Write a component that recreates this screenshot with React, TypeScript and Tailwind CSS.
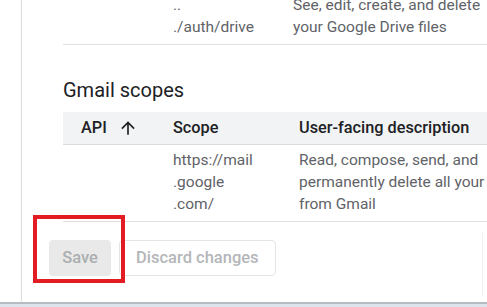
import React from 'react';

function ArrowUp() {
  return (
    <svg width="20" height="20" viewBox="0 0 24 24" className="fill-[#202124]">
      <path d="M4 12l1.41 1.41L11 7.83V20h2V7.83l5.58 5.59L20 12l-8-8-8 8z" />
    </svg>
  );
}

export default function App() {
  return (
    <div className="relative w-[487px] h-[307px] overflow-hidden bg-white font-['Roboto',sans-serif]">
      <div className="h-[302px] ml-[21px] border-l border-[#dadce0] pl-[41px] overflow-hidden">
        <div className="-mt-[6px] w-[600px]">
          {/* Drive table tail */}
          <div className="flex border-b border-[#e0e0e0] pb-[6px] text-[15.5px] leading-[22px] text-[#5f6368]">
            <div className="w-[92px]" />
            <div className="w-[120px] pl-[18px]">
              <div>..</div>
              <div>./auth/drive</div>
            </div>
            <div className="flex-1 pl-[18px]">
              <div>See, edit, create, and delete</div>
              <div>your Google Drive files</div>
            </div>
          </div>

          <h2 className="mt-[31px] mb-[8px] text-[20px] leading-[28px] text-[#202124]">Gmail scopes</h2>

          {/* Gmail table */}
          <div className="flex h-[33px] items-center bg-[#f1f3f4] border-b border-[#dadce0] text-[16.3px] font-medium text-[#202124]">
            <div className="w-[92px] pl-[18px] flex items-center gap-[11px]">
              <span>API</span>
              <ArrowUp />
            </div>
            <div className="w-[126px] pl-[18px]">Scope</div>
            <div className="flex-1 pl-[18px]">User-facing description</div>
          </div>
          <div className="flex border-b border-[#e0e0e0] pt-[4px] pb-[6px] text-[15.5px] leading-[22px] text-[#5f6368]">
            <div className="w-[92px]" />
            <div className="w-[126px] pl-[18px]">
              <div>https://mail</div>
              <div>.google</div>
              <div>.com/</div>
            </div>
            <div className="flex-1 pl-[18px]">
              <div>Read, compose, send, and</div>
              <div>permanently delete all your email</div>
              <div>from Gmail</div>
            </div>
          </div>

          <div className="mt-[18px] -ml-[14px] flex gap-[8px]">
            <button className="h-[36px] w-[62px] rounded-[4px] bg-[#e8e9e8] text-[16.5px] font-medium text-[#abaeb1]">
              Save
            </button>
            <button className="h-[36px] px-[16px] rounded-[4px] border border-[#e3e4e6] text-[16.5px] font-medium text-[#b4b6b9]">
              Discard changes
            </button>
          </div>
        </div>
      </div>
      <div className="h-[2px] bg-[#b7bcc2]" />
      <div className="h-[3px] bg-[#dde4ec]" />

      {/* faint edge of side panel */}
      <div className="absolute left-[482px] top-[233px] w-[5px] h-[64px] border-l border-[#f1f1f1]" />

      {/* annotation box */}
      <div className="absolute left-[33px] top-[215px] w-[92px] h-[68px] border-[4px] border-[#e31b23]" />
    </div>
  );
}
